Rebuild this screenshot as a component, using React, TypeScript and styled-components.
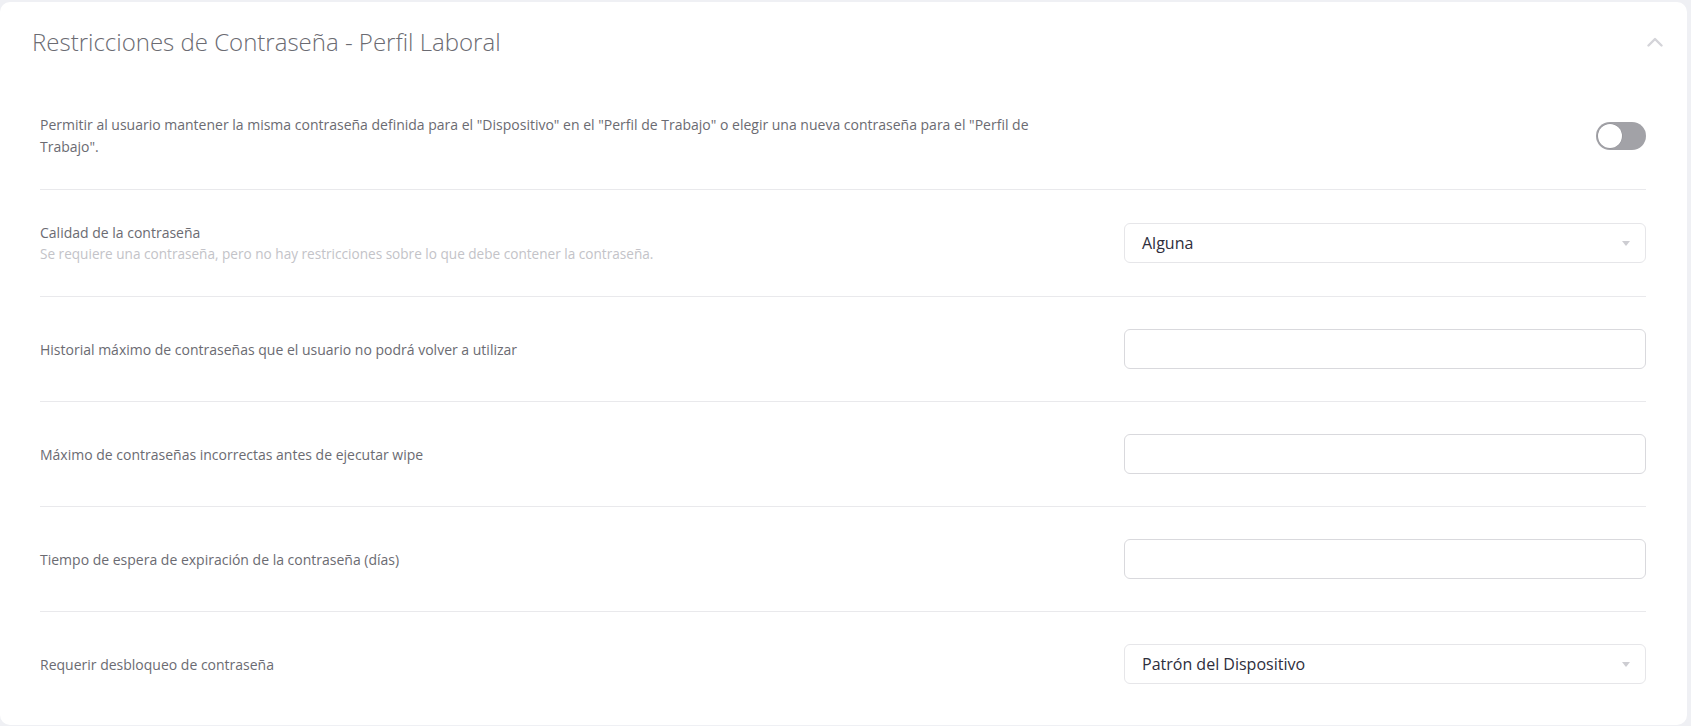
import React from "react";
import styled, { createGlobalStyle } from "styled-components";

const GlobalStyle = createGlobalStyle`
  html, body {
    margin: 0;
    padding: 0;
    background: #eff0f4;
  }
  body {
    font-family: "Open Sans", "Noto Sans", sans-serif;
    -webkit-font-smoothing: antialiased;
  }
  * { box-sizing: border-box; }
`;

const Page = styled.div`
  padding: 2px 4px 0 0;
`;

const Card = styled.section`
  background: #ffffff;
  border-radius: 10px;
  padding-bottom: 9px;
`;

const Header = styled.header`
  display: flex;
  align-items: center;
  justify-content: space-between;
  height: 79px;
  padding: 0 24px 0 32px;
`;

const Title = styled.h2`
  margin: 0;
  font-size: 24px;
  font-weight: 300;
  color: #6b6b72;
`;

const CollapseButton = styled.button`
  display: flex;
  align-items: center;
  justify-content: center;
  width: 16px;
  height: 16px;
  padding: 0;
  border: none;
  background: transparent;
  cursor: pointer;
`;

const Body = styled.div`
  padding: 0 41px 0 40px;
`;

const Row = styled.div<{ $first?: boolean }>`
  display: grid;
  grid-template-columns: 1fr 522px;
  column-gap: 40px;
  align-items: center;
  padding: ${(p) => (p.$first ? "33px 0 31px" : "32px 0")};
  border-top: ${(p) => (p.$first ? "none" : "1px solid #e9e9ec")};
`;

const LabelBlock = styled.div<{ $maxWidth?: number }>`
  max-width: ${(p) => (p.$maxWidth ? `${p.$maxWidth}px` : "none")};
`;

const Label = styled.div<{ $lh?: number }>`
  font-size: 14px;
  line-height: ${(p) => p.$lh ?? 21}px;
  color: #6b6b72;
`;

const Hint = styled.div`
  font-size: 13.6px;
  line-height: 21px;
  color: #c3c3c8;
`;

const ControlCell = styled.div<{ $align?: "end" | "stretch" }>`
  display: flex;
  justify-content: ${(p) => (p.$align === "end" ? "flex-end" : "stretch")};
`;

const Toggle = styled.button<{ $on?: boolean }>`
  position: relative;
  width: 50px;
  height: 28px;
  padding: 0;
  border: none;
  border-radius: 14px;
  background: ${(p) => (p.$on ? "#4a90e2" : "#a2a2a7")};
  cursor: pointer;
`;

const Knob = styled.span<{ $on?: boolean }>`
  position: absolute;
  top: 2px;
  left: ${(p) => (p.$on ? "24px" : "2px")};
  width: 24px;
  height: 24px;
  border-radius: 50%;
  background: #ffffff;
  box-shadow: 0 0 0 0.5px #8e8e94;
`;

const SelectBox = styled.div`
  display: flex;
  align-items: center;
  justify-content: space-between;
  width: 100%;
  height: 40px;
  padding: 0 15px 0 17px;
  border: 1px solid #e6e6e9;
  border-radius: 6px;
  background: #ffffff;
  font-size: 16px;
  color: #2e2e3c;
  cursor: pointer;
`;

const Caret = styled.span`
  width: 0;
  height: 0;
  border-left: 4px solid transparent;
  border-right: 4px solid transparent;
  border-top: 5px solid #cdcdd2;
`;

const TextInput = styled.input`
  width: 100%;
  height: 40px;
  padding: 0 17px;
  border: 1px solid #d9d9dd;
  border-radius: 6px;
  background: #ffffff;
  font-family: inherit;
  font-size: 16px;
  color: #2e2e3c;
  outline: none;
`;

const ChevronUp = () => (
  <svg width="16" height="10" viewBox="0 0 16 10" fill="none">
    <polyline
      points="1.5,8.5 8,2 14.5,8.5"
      stroke="#d4d4d9"
      strokeWidth="2.4"
      strokeLinecap="round"
      strokeLinejoin="round"
    />
  </svg>
);

const Select = ({ value }: { value: string }) => (
  <SelectBox>
    <span>{value}</span>
    <Caret />
  </SelectBox>
);

export default function App() {
  return (
    <>
      <GlobalStyle />
      <Page>
        <Card>
          <Header>
            <Title>Restricciones de Contraseña - Perfil Laboral</Title>
            <CollapseButton aria-label="Contraer">
              <ChevronUp />
            </CollapseButton>
          </Header>
          <Body>
            <Row $first>
              <LabelBlock $maxWidth={1000}>
                <Label $lh={22}>
                  Permitir al usuario mantener la misma contraseña definida para el "Dispositivo" en el
                  "Perfil de Trabajo" o elegir una nueva contraseña para el "Perfil de Trabajo".
                </Label>
              </LabelBlock>
              <ControlCell $align="end">
                <Toggle aria-label="Permitir misma contraseña">
                  <Knob />
                </Toggle>
              </ControlCell>
            </Row>
            <Row>
              <LabelBlock>
                <Label>Calidad de la contraseña</Label>
                <Hint>
                  Se requiere una contraseña, pero no hay restricciones sobre lo que debe contener la
                  contraseña.
                </Hint>
              </LabelBlock>
              <ControlCell>
                <Select value="Alguna" />
              </ControlCell>
            </Row>
            <Row>
              <Label>Historial máximo de contraseñas que el usuario no podrá volver a utilizar</Label>
              <ControlCell>
                <TextInput type="text" />
              </ControlCell>
            </Row>
            <Row>
              <Label>Máximo de contraseñas incorrectas antes de ejecutar wipe</Label>
              <ControlCell>
                <TextInput type="text" />
              </ControlCell>
            </Row>
            <Row>
              <Label>Tiempo de espera de expiración de la contraseña (días)</Label>
              <ControlCell>
                <TextInput type="text" />
              </ControlCell>
            </Row>
            <Row>
              <Label>Requerir desbloqueo de contraseña</Label>
              <ControlCell>
                <Select value="Patrón del Dispositivo" />
              </ControlCell>
            </Row>
          </Body>
        </Card>
      </Page>
    </>
  );
}
